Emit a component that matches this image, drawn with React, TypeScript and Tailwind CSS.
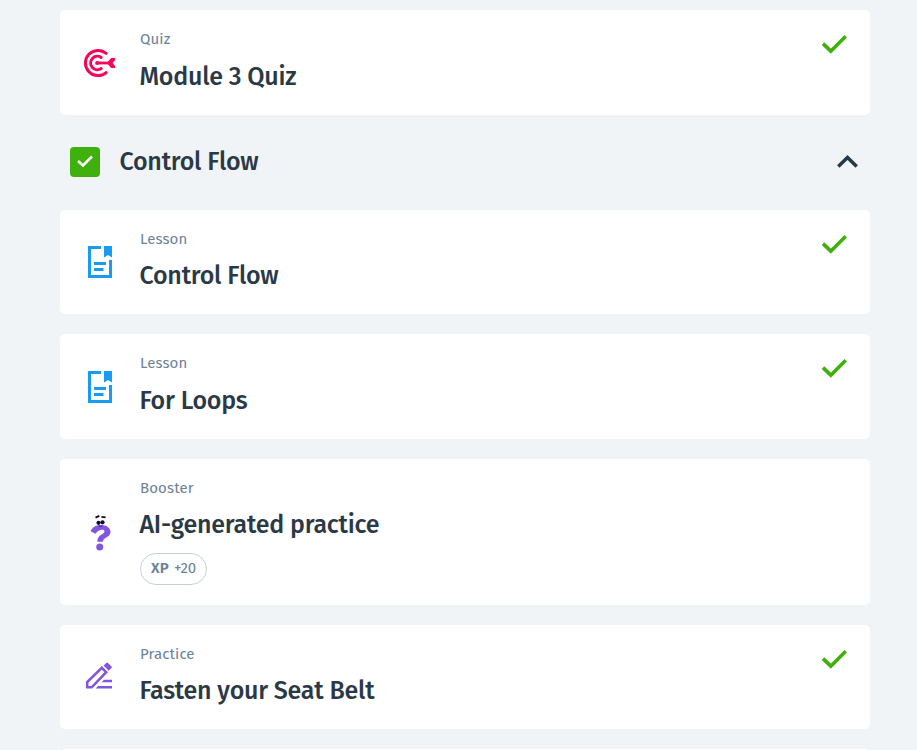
import React from "react";

const font = "font-['Fira_Sans','Noto_Sans',sans-serif]";

function QuizIcon() {
  return (
    <svg width="32" height="30" viewBox="-0.600 0 32 30" fill="none" stroke="#f5055a" strokeWidth="3" className="mr-[4px] overflow-visible">
      <path d="M23.600 5.400A12.600 12.600 0 1 0 23.600 24.600" strokeLinecap="round" />
      <path d="M18.600 9.500A6.700 6.700 0 1 0 18.600 20.500" strokeLinecap="round" />
      <path d="M14.500 15H28" strokeWidth="2.800" />
      <circle cx="14.500" cy="15" r="2" fill="#f5055a" stroke="none" />
      <path d="M24.300 15l4.200-5h4v2l-2.500 3l2.500 3v2h-4z" fill="#f5055a" stroke="none" />
    </svg>
  );
}

function LessonIcon() {
  return (
    <svg width="24" height="32" viewBox="0 0 24 32">
      <path d="M13 1.500H1.500V30.500H22.500V14" fill="none" stroke="#199bf3" strokeWidth="3" />
      <path d="M6 17.500H18M6 23.500H15.500" stroke="#199bf3" strokeWidth="3" />
      <path d="M16 0h8v11.500l-4-2.500l-4 2.500z" fill="#199bf3" />
    </svg>
  );
}

function BoosterIcon() {
  return (
    <svg width="24" height="38" viewBox="0 0 24 38" className="ml-1">
      <path d="M0.600 18.300C2 14.500 5.500 12 10.500 12C16.500 12 20.500 14.700 20.500 19C20.500 24.500 13.200 24 12.900 28.800H7.200C7.200 21.500 14.500 21.500 14.500 18.500C14.500 15.500 8 16.600 5.500 20.800Z" fill="#8454e0" />
      <circle cx="9.700" cy="34" r="3.500" fill="#8454e0" />
      <path d="M5.500 4.600L9.300 2.900M11.500 3.900L15.600 4.400" stroke="#0a0a2a" strokeWidth="1.900" />
      <circle cx="8.500" cy="9.800" r="2.100" fill="#0a0a2a" />
      <circle cx="12.500" cy="9.300" r="2.100" fill="#0a0a2a" />
      <path d="M9 13q2 1.500 3-.5" fill="none" stroke="#38216e" strokeWidth="1" />
    </svg>
  );
}

function PracticeIcon() {
  return (
    <svg width="28" height="28" viewBox="0 0.500 28 28" className="mr-[2px] mb-[3px] overflow-visible">
      <path d="M2.200 25.800V20.500L16.800 6.300L21.200 10.700L6.700 25.800Z" fill="none" stroke="#8454e0" strokeWidth="2.500" />
      <path d="M18.600 4.100L21.300 1.400Q22.200 .7 23 1.400L26.500 4.900Q27.300 5.800 26.500 6.600L23.700 9.300Z" fill="#8454e0" />
      <path d="M19 18.200H27V20.700H16.600ZM13 24.500H27V27H10.600Z" fill="#8454e0" />
    </svg>
  );
}

function Done() {
  return (
    <svg width="26" height="20" viewBox="-0.500 0 26 20" className="mt-[24.200px] mr-[23px] shrink-0">
      <path d="M1.500 9.700L9.300 17.200L24.300 2.200" fill="none" stroke="#3fb00d" strokeWidth="3.700" />
    </svg>
  );
}

type Props = {
  kind: string;
  title: string;
  icon: React.ReactNode;
  done?: boolean;
  xp?: string;
};

function Card({ kind, title, icon, done, xp }: Props) {
  return (
    <article className={`flex w-[810px] shrink-0 rounded-[5px] bg-white ${xp ? "h-[146px]" : "h-[104.500px]"}`}>
      <div className="flex w-20 shrink-0 items-center justify-center">{icon}</div>
      <div className="flex-1 pt-[17px]">
        <p className="h-6 text-[15px] leading-6 tracking-[0.12px] text-[#6b8299]">{kind}</p>
        <h3 className="-ml-[0.500px] mt-[8.250px] h-[34px] text-[25px] leading-[34px] font-medium tracking-[-0.230px] whitespace-nowrap text-[#2b3947]">{title}</h3>
        {xp && (
          <div className="mt-[10.750px] flex h-8 w-[67px] items-center justify-center gap-[5px] rounded-full border border-[#c5d0dc] pb-[2px] text-[15px] leading-5 text-[#6b8299]">
            <span className="font-semibold tracking-[0.200px]">XP</span>
            <span className="tracking-[-0.100px]">{xp}</span>
          </div>
        )}
      </div>
      {done && <Done />}
    </article>
  );
}

export default function App() {
  return (
    <main className={`h-[750px] overflow-hidden bg-[#f0f4f7] pt-[10.300px] pl-[60px] ${font}`}>
      <div className="flex flex-col">
        <Card kind="Quiz" title="Module 3 Quiz" icon={<QuizIcon />} done />
        <header className="flex h-[95px] w-[810px] items-center pl-[10px]">
          <span className="flex size-[30px] items-center justify-center rounded-[4px] bg-[#3fb00d]">
            <svg width="18" height="14" viewBox="0 0 18 14" className="mb-[2px]">
              <path d="M2 7L7 11.500L16 2.500" fill="none" stroke="white" strokeWidth="2.500" />
            </svg>
          </span>
          <h2 className="ml-[19.500px] text-[25px] leading-[34px] font-medium tracking-[-0.230px] text-[#2b3947]">Control Flow</h2>
          <svg width="22" height="14" viewBox="-0.500 -0.500 22 14" className="mr-[12px] mb-[2px] ml-auto overflow-visible">
            <path d="M1.800 12L11 3L20.200 12" fill="none" stroke="#2b3947" strokeWidth="3.500" />
          </svg>
        </header>
        <div className="flex flex-col gap-5">
          <Card kind="Lesson" title="Control Flow" icon={<LessonIcon />} done />
          <Card kind="Lesson" title="For Loops" icon={<LessonIcon />} done />
          <Card kind="Booster" title="AI-generated practice" icon={<BoosterIcon />} xp="+20" />
          <Card kind="Practice" title="Fasten your Seat Belt" icon={<PracticeIcon />} done />
          <div className="h-10 w-[810px] rounded-[5px] bg-white" />
        </div>
      </div>
    </main>
  );
}
